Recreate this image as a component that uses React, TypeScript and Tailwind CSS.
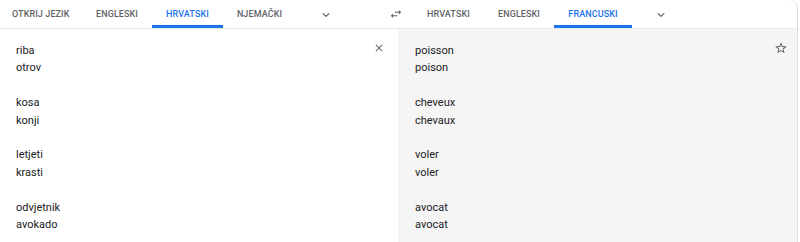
import React from "react";

function Chevron() {
  return (
    <svg width="14" height="14" viewBox="0 0 24 24" fill="none">
      <path d="M7 9.5l5 5 5-5" stroke="#5f6368" strokeWidth="2" strokeLinecap="round" strokeLinejoin="round" />
    </svg>
  );
}

function Swap() {
  return (
    <svg width="14" height="14" viewBox="0 0 24 24" fill="#5f6368">
      <path d="M6.99 11L3 15l3.99 4v-3H14v-2H6.99v-3zM21 9l-3.99-4v3H10v2h7.01v3L21 9z" />
    </svg>
  );
}

function Tab({ label, active, w }: { label: string; active?: boolean; w: string }) {
  return (
    <div
      className={`relative flex h-full shrink-0 items-center justify-center whitespace-nowrap pt-[2px] ${w} text-[9px] font-medium tracking-[0.1px] ${
        active ? "text-[#1a73e8]" : "text-[#5f6368]"
      }`}
    >
      {label}
      {active && <div className="absolute bottom-0 left-0 right-0 h-[3px] bg-[#1a73e8]" />}
    </div>
  );
}

export default function App() {
  const left = [
    ["riba", "otrov"],
    ["kosa", "konji"],
    ["letjeti", "krasti"],
    ["odvjetnik", "avokado"],
  ];
  const right = [
    ["poisson", "poison"],
    ["cheveux", "chevaux"],
    ["voler", "voler"],
    ["avocat", "avocat"],
  ];
  return (
    <div
      className="w-[800px] h-[242px] overflow-hidden bg-white"
      style={{ fontFamily: "Roboto, Arial, sans-serif" }}
    >
      <div className="mr-[2px] h-full rounded-tr-[8px] border-r border-[#dadce0] flex flex-col">
        <div className="flex h-[29px] border-b border-[#e8eaed]">
          <div className="flex w-[398px] items-stretch">
            <div className="flex h-full w-[82px] shrink-0 items-center whitespace-nowrap pl-[12px] pt-[2px] text-[9px] font-medium tracking-[0.1px] text-[#5f6368]">
              OTKRIJ JEZIK
            </div>
            <Tab label="ENGLESKI" w="w-[70px]" />
            <Tab label="HRVATSKI" w="w-[71px]" active />
            <Tab label="NJEMAČKI" w="w-[73px]" />
            <div className="flex items-center pl-[23px] pt-[2px]">
              <Chevron />
            </div>
            <div className="flex items-center pl-[56px]">
              <Swap />
            </div>
          </div>
          <div className="flex flex-1 items-stretch pl-[15px]">
            <Tab label="HRVATSKI" w="w-[71px]" />
            <Tab label="ENGLESKI" w="w-[70px]" />
            <Tab label="FRANCUSKI" w="w-[78px]" active />
            <div className="flex items-center pl-[22px] pt-[2px]">
              <Chevron />
            </div>
          </div>
        </div>
        <div className="flex flex-1">
          <div className="relative w-[398px] pl-[16px] pt-[13px] text-[11px] leading-[17.4px] text-[#202124]">
            {left.map((g, i) => (
              <div key={i} className={i > 0 ? "mt-[17.4px]" : ""}>
                <div>{g[0]}</div>
                <div>{g[1]}</div>
              </div>
            ))}
            <div className="absolute right-[13px] top-[13px]">
              <svg width="12" height="12" viewBox="0 0 24 24" fill="#5f6368">
                <path d="M19 6.41L17.59 5 12 10.59 6.41 5 5 6.41 10.59 12 5 17.59 6.41 19 12 13.41 17.59 19 19 17.59 13.41 12z" />
              </svg>
            </div>
          </div>
          <div className="relative flex-1 bg-[#f5f5f5] pl-[17px] pt-[13px] text-[11px] leading-[17.4px] text-[#202124]">
            {right.map((g, i) => (
              <div key={i} className={i > 0 ? "mt-[17.4px]" : ""}>
                <div>{g[0]}</div>
                <div>{g[1]}</div>
              </div>
            ))}
            <div className="absolute right-[9px] top-[12px]">
              <svg width="14" height="14" viewBox="0 0 24 24" fill="#5f6368">
                <path d="M22 9.24l-7.19-.62L12 2 9.19 8.63 2 9.24l5.46 4.73L5.82 21 12 17.27 18.18 21l-1.63-7.03L22 9.24zM12 15.4l-3.76 2.27 1-4.28-3.32-2.88 4.38-.38L12 6.1l1.71 4.04 4.38.38-3.32 2.88 1 4.28L12 15.4z" />
              </svg>
            </div>
          </div>
        </div>
      </div>
    </div>
  );
}
